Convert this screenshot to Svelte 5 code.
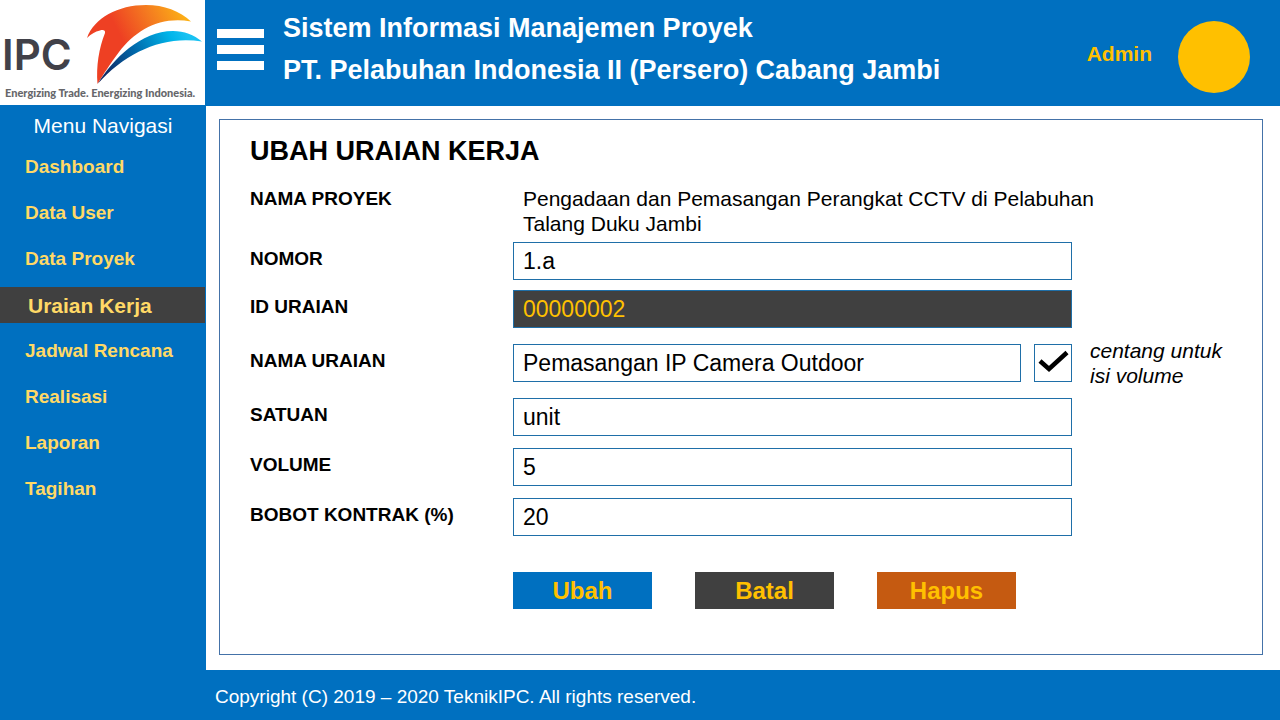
<script>
  const menu = ['Dashboard', 'Data User', 'Data Proyek', 'Uraian Kerja', 'Jadwal Rencana', 'Realisasi', 'Laporan', 'Tagihan'];
  const active = 'Uraian Kerja';

  let nomor = $state('1.a');
  let idUraian = $state('00000002');
  let namaUraian = $state('Pemasangan IP Camera Outdoor');
  let isiVolume = $state(true);
  let satuan = $state('unit');
  let volume = $state('5');
  let bobot = $state('20');
</script>

<div class="page">
  <aside class="sidebar">
    <a class="logo" href="#beranda" aria-label="IPC">
      <svg viewBox="0 0 205 105" width="205" height="105">
        <defs>
          <linearGradient id="warm" gradientUnits="userSpaceOnUse" x1="108" y1="50" x2="186" y2="10">
            <stop offset="0.2" stop-color="#ee4023" />
            <stop offset="0.6" stop-color="#f47b20" />
            <stop offset="1" stop-color="#fdb515" />
          </linearGradient>
          <linearGradient id="cool" gradientUnits="userSpaceOnUse" x1="100" y1="80" x2="185" y2="32">
            <stop offset="0.05" stop-color="#12265f" />
            <stop offset="0.45" stop-color="#0067a9" />
            <stop offset="0.85" stop-color="#00b5ea" />
            <stop offset="1" stop-color="#18c1f2" />
          </linearGradient>
        </defs>
        <path fill="url(#warm)" d="M87 38C94 18 118 5 146 5C164 5 180 11 191 21.500C160 16 136 30 119 52C110 64 103 75 97.500 84C96 66 99 48 105 33C105.500 30 103 29.500 100 30.500C95 31.500 91 34 87 38Z" />
        <path fill="url(#cool)" d="M98 83.500C113 59 141 31 173 31C184 31 194 35 202 41.500C164 35 126 52 98 83.500Z" />
        <text class="brand" x="2" y="70">IPC</text>
        <text class="tagline" x="5" y="97">Energizing Trade. Energizing Indonesia.</text>
      </svg>
    </a>
    <h2>Menu Navigasi</h2>
    <nav>
      {#each menu as item}
        <a href="#menu" class:active={item === active} aria-current={item === active ? 'page' : undefined}>{item}</a>
      {/each}
    </nav>
  </aside>

  <header>
    <button class="burger" type="button" aria-label="Menu"><span></span><span></span><span></span></button>
    <h1>Sistem Informasi Manajemen Proyek<br />PT. Pelabuhan Indonesia II (Persero) Cabang Jambi</h1>
    <div class="user"><span class="name">Admin</span><span class="avatar"></span></div>
  </header>

  <main>
    <form class="panel" onsubmit={(e) => e.preventDefault()}>
      <h2>UBAH URAIAN KERJA</h2>
      <div class="row project">
        <span class="label">NAMA PROYEK</span>
        <p>Pengadaan dan Pemasangan Perangkat CCTV di Pelabuhan Talang Duku Jambi</p>
      </div>
      <div class="row first">
        <label class="label" for="nomor">NOMOR</label>
        <input id="nomor" type="text" bind:value={nomor} />
      </div>
      <div class="row">
        <label class="label" for="id-uraian">ID URAIAN</label>
        <input id="id-uraian" class="locked" type="text" readonly bind:value={idUraian} />
      </div>
      <div class="row">
        <label class="label" for="nama-uraian">NAMA URAIAN</label>
        <div class="with-check">
          <input id="nama-uraian" type="text" bind:value={namaUraian} />
          <span class="check">
            <input id="isi-volume" type="checkbox" bind:checked={isiVolume} />
            {#if isiVolume}
              <svg viewBox="0 0 38 38" width="38" height="38"><path d="M6 17L15 25L33 8.500" /></svg>
            {/if}
          </span>
        </div>
        <label class="note" for="isi-volume">centang untuk isi volume</label>
      </div>
      <div class="row">
        <label class="label" for="satuan">SATUAN</label>
        <input id="satuan" type="text" bind:value={satuan} />
      </div>
      <div class="row spaced">
        <label class="label" for="volume">VOLUME</label>
        <input id="volume" type="text" bind:value={volume} />
      </div>
      <div class="row spaced">
        <label class="label" for="bobot">BOBOT KONTRAK (%)</label>
        <input id="bobot" type="text" bind:value={bobot} />
      </div>
      <div class="actions">
        <button type="submit">Ubah</button>
        <button type="button" class="cancel">Batal</button>
        <button type="button" class="delete">Hapus</button>
      </div>
    </form>
  </main>

  <footer>Copyright (C) 2019 – 2020 TeknikIPC. All rights reserved.</footer>
</div>

<style>
  :global(body) {
    margin: 0;
  }
  .page {
    display: grid;
    grid-template-columns: 206px minmax(0, 1fr);
    grid-template-rows: auto 1fr auto;
    min-height: 100vh;
    background: #fff;
    color: #000;
    font-family: 'Liberation Sans', Arial, sans-serif;
  }
  .page *,
  .page {
    box-sizing: border-box;
  }
  h1,
  h2,
  p {
    margin: 0;
  }
  a {
    text-decoration: none;
  }
  button {
    border: 0;
    font: inherit;
    cursor: pointer;
  }

  .sidebar {
    grid-row: 1 / 4;
    background: #0070c0;
  }
  .logo,
  .logo svg {
    display: block;
  }
  .logo {
    width: 205px;
    background: #fff;
  }
  .brand {
    font: 600 42px Inter, sans-serif;
    fill: #414149;
  }
  .tagline {
    font: 900 11px Lato, sans-serif;
    fill: #66666a;
  }
  .sidebar h2 {
    padding-top: 8px;
    color: #fff;
    font-size: 21px;
    font-weight: 400;
    line-height: 26px;
    text-align: center;
  }
  nav {
    display: flex;
    flex-direction: column;
    gap: 10px;
    padding: 10px 1px 10px 0;
  }
  nav a {
    padding-left: 25px;
    color: #ffd966;
    font-size: 19px;
    font-weight: 700;
    line-height: 36px;
  }
  nav a.active {
    padding: 2px 0 0 28px;
    background: #404040;
    font-size: 21px;
    line-height: 34px;
  }

  header {
    display: flex;
    align-items: center;
    min-height: 106px;
    padding: 0 30px 8px 11px;
    background: #0070c0;
    color: #fff;
  }
  .burger {
    display: flex;
    flex-direction: column;
    gap: 7px;
    width: 47px;
    padding: 0;
    background: none;
  }
  .burger span {
    height: 9px;
    background: #fff;
  }
  h1 {
    flex: 1;
    margin-left: 19px;
    font-size: 27px;
    line-height: 42px;
  }
  .user {
    display: flex;
    align-items: center;
    gap: 26px;
    margin-top: 16px;
    color: #ffc000;
    font-size: 21px;
    font-weight: 700;
  }
  .name {
    padding-bottom: 6px;
  }
  .avatar {
    width: 72px;
    height: 72px;
    border-radius: 50%;
    background: #ffc000;
  }

  main {
    display: flex;
    padding: 13px 17px 15px 13px;
  }
  .panel {
    flex: 1;
    padding: 14px 30px;
    border: 1px solid #4472a8;
  }
  .panel h2 {
    font-size: 27px;
    line-height: 34px;
  }
  .row {
    display: grid;
    grid-template-columns: 263px minmax(0, 1fr) 160px;
    align-items: center;
    margin-top: 10px;
  }
  .row.first {
    margin-top: 6px;
  }
  .row.spaced {
    margin-top: 12px;
  }
  .row.project {
    align-items: start;
    margin-top: 18px;
  }
  .label {
    padding-bottom: 6px;
    font-size: 19px;
    font-weight: 700;
    line-height: 25px;
  }
  .project p {
    grid-column: 2 / 4;
    max-width: 600px;
    padding-left: 10px;
    font-size: 21px;
    line-height: 25px;
  }
  input[type='text'] {
    width: 100%;
    min-width: 0;
    height: 38px;
    padding: 0 9px;
    border: 1px solid #1f6fa8;
    border-radius: 0;
    background: #fff;
    color: #000;
    font: 23px 'Liberation Sans', Arial, sans-serif;
    outline: 0;
  }
  input[type='text'].locked {
    background: #404040;
    color: #ffc000;
  }
  .with-check {
    display: flex;
    gap: 13px;
  }
  .check {
    display: grid;
    flex: none;
  }
  .check input,
  .check svg {
    grid-area: 1 / 1;
  }
  .check input {
    appearance: none;
    width: 38px;
    height: 38px;
    margin: 0;
    border: 1px solid #1f6fa8;
  }
  .check svg {
    fill: none;
    stroke: #000;
    stroke-width: 4.5;
    pointer-events: none;
  }
  .note {
    padding-left: 18px;
    font-size: 21px;
    font-style: italic;
    line-height: 25px;
  }
  .actions {
    display: flex;
    flex-wrap: wrap;
    gap: 43px;
    margin: 36px 0 0 263px;
  }
  .actions button {
    width: 139px;
    padding: 0;
    background: #0070c0;
    color: #ffc000;
    font-size: 24px;
    font-weight: 700;
    line-height: 37px;
  }
  .actions .cancel {
    background: #404040;
  }
  .actions .delete {
    background: #c55a11;
  }

  footer {
    padding: 3px 9px 0;
    background: #0070c0;
    color: #fff;
    font-size: 19px;
    line-height: 47px;
  }
</style>
